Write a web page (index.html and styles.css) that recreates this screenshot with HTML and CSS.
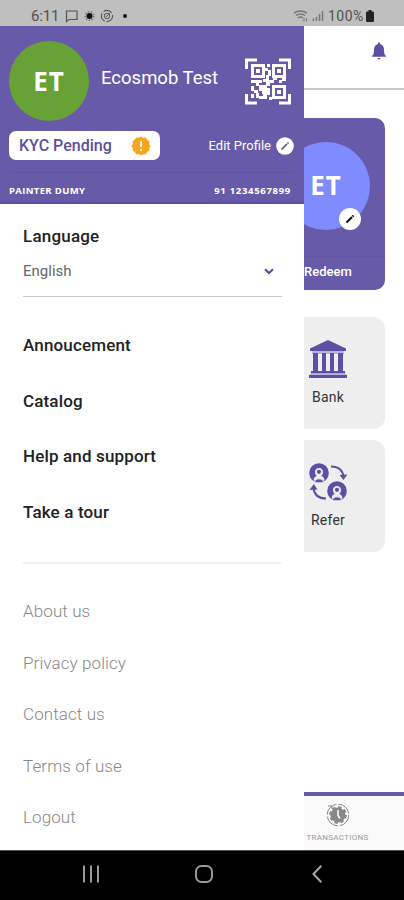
FILE: index.html
```html
<!DOCTYPE html>
<html lang="en">
<head>
<meta charset="utf-8">
<title>Ecosmob</title>
<link rel="stylesheet" href="styles.css">
</head>
<body>
<div class="phone">
  <div class="status">
    <span class="clock">6:11</span>
    <svg class="status-icons" width="66" height="14" viewBox="0 0 66 14" fill="none" stroke="#555">
      <path d="M1.500 2H12v8.500H4L1.500 12.500z" stroke-width="1.200"/>
      <circle cx="24.500" cy="7" r="4.300" stroke="#777" stroke-dasharray="1.500 1.500" stroke-width="1.500"/><circle cx="24.500" cy="7" r="3" fill="#111" stroke="none"/>
      <circle cx="42" cy="7" r="5.600" stroke-dasharray="9 2" stroke-width="1.100"/><circle cx="42" cy="7" r="2.700"/><path d="M41 8l4-4"/>
      <circle cx="60" cy="7" r="2" fill="#111" stroke="none"/>
    </svg>
    <svg class="signal" width="32" height="14" viewBox="0 0 32 14" fill="none" stroke="#777" stroke-width="1.200">
      <path d="M1 4q6.500-4 13 0M3 6.500q4.500-3 9 0M5 9q2.500-2 5 0" stroke-width="1.600"/><path d="M11 9v3.500M13.500 9v3.500" stroke-width="1"/>
      <path d="M20.500 12v-2.500M23.500 12V8M26.500 12V5M29.500 12V2" stroke-width="1.500"/>
    </svg>
    <span class="percent">100%</span>
    <svg width="8" height="12" viewBox="0 0 8 12"><path d="M2.500 0h3v1.500H7q1 0 1 1V11q0 1-1 1H1q-1 0-1-1V2.500q0-1 1-1h1.500z" fill="#222"/></svg>
  </div>

  <div class="app">
    <aside class="drawer">
      <header class="profile">
        <div class="identity">
          <div class="avatar">ET</div>
          <h1 class="name">Ecosmob Test</h1>
          <svg class="qr" width="46" height="47" viewBox="0 0 46 47" fill="none" stroke="#fff">
            <path d="M1.500 11V2H12M34 2h10.500v9M1.500 36v9H12M34 45h10.500v-9" stroke-width="3"/>
            <path d="M7.500 7.500h11v11h-11zM28.500 7.500h11v11h-11zM28.500 28.500h11v11h-11z" stroke-width="3"/>
            <g fill="#fff" stroke="none">
              <path d="M11 11h4v4h-4zM32 11h4v4h-4zM32 32h4v4h-4z"/>
              <path d="M22 6h3v3h-3zM20 10h3v3h-3zM23 12h3v6h-3zM21 17h3v5h4v-2h4v2h-3v3h-4v3h-4v-4h-3v-3h3zM6 22h11v3h-3v3h-3v-3H6zM34 22h3v3h-3zM37 20h4v3h-4zM14 27h8v3h3v3h-4v3h-4v-3h-3zM6 28h3v5H6zM9 32h4v3H9zM6 36h3v4H6zM11 35h3v5h-3zM14 38h4v-3h3v-2h4v4h-3v4h-8zM24 39h3v3h-3z"/>
            </g>
          </svg>
        </div>
        <div class="actions">
          <div class="kyc">
            <span>KYC Pending</span>
            <svg width="20" height="20" viewBox="0 0 20 20"><path d="M10 .5l2.200 1.200 2.600-.1 1.300 2.200 2.200 1.300-.1 2.600L19.500 10l-1.300 2.200.1 2.600-2.200 1.300-1.300 2.200-2.600-.1L10 19.500l-2.200-1.300-2.600.1-1.300-2.200-2.200-1.300.1-2.600L.5 10l1.300-2.300-.1-2.600 2.200-1.300 1.300-2.200 2.600.1z" fill="#f7a51c"/><path d="M10 5v6M10 13v2" stroke="#fff" stroke-width="2"/></svg>
          </div>
          <div class="edit">
            <span>Edit Profile</span>
            <svg width="18" height="18" viewBox="0 0 18 18"><circle cx="9" cy="9" r="8.800" fill="#fff"/><path d="M5.500 12.500l5.500-5.500M11.500 6.500l1-1" stroke="#5c5478" stroke-width="1.700"/></svg>
          </div>
        </div>
        <div class="facts"><span>PAINTER DUMY</span><span class="number">91 1234567899</span></div>
      </header>
      <section class="language">
        <h2>Language</h2>
        <div class="select"><span>English</span><svg width="10" height="7" viewBox="0 0 10 7"><path d="M1 1.200l4 3.800 4-3.800" fill="none" stroke="#5547a3" stroke-width="2"/></svg></div>
      </section>
      <nav class="menu">
        <a>Annoucement</a><a>Catalog</a><a>Help and support</a><a>Take a tour</a>
      </nav>
      <nav class="links">
        <a>About us</a><a>Privacy policy</a><a>Contact us</a><a>Terms of use</a><a>Logout</a>
      </nav>
    </aside>

    <main class="home">
      <div class="topbar">
        <svg width="14" height="18" viewBox="0 0 14 18" fill="#5c50a5"><path d="M6 1q1-1.500 2 0v1q3.800 1 4 5.500.1 4 .6 5L14 14v.8H0V14l1.400-1.500q.500-1 .6-5Q2.200 3 6 2zM5.300 16h3.400Q7 19 5.300 16z"/></svg>
      </div>
      <section class="points">
        <div class="photo">ET
          <svg class="badge" width="22" height="22" viewBox="0 0 22 22"><circle cx="11" cy="11" r="11" fill="#fff"/><path d="M7.500 14.500l5.500-5.500M13.500 8.500l1-1" stroke="#111" stroke-width="2.200"/></svg>
        </div>
        <div class="redeem">Redeem</div>
      </section>
      <section class="tile">
        <svg width="38" height="39" viewBox="0 0 38 39" fill="#5c50a5"><path d="M19 0l18 8.500V11H1V8.500z"/><path d="M3 11h32v3H3z" fill="#b9b4da"/><path d="M4 13h5v18H4zM13 13h4v18h-4zM21 13h4v18h-4zM29 13h5v18h-5zM2 31h34v2.500H2z"/><path d="M1 33.500h36V35H1z" fill="#b9b4da"/><path d="M0 35h38v3H0z"/></svg>
        <span>Bank</span>
      </section>
      <section class="tile">
        <svg width="38" height="39" viewBox="0 0 38 39" fill="none" stroke="#5c50a5">
          <g id="person"><circle cx="10" cy="10" r="9.800" fill="#5c50a5" stroke="none"/><path d="M4.500 17.500q.3-4 3.300-4.600-2.300-1.600-1.800-4.400Q6.700 5 10 5t4 3.500q.5 2.800-1.800 4.400 3 .6 3.300 4.600" fill="#eee" stroke="none"/><circle cx="10" cy="8.800" r="2.100" fill="#5c50a5" stroke="none"/><path d="M5.500 19.800q0-4 4.500-4t4.500 4z" fill="#5c50a5" stroke="#eee"/></g>
          <use href="#person" x="18" y="18"/>
          <path d="M22 3.500q11 0 12.500 10M17 35.500q-11 0-12.500-10" stroke-width="2"/>
          <path d="M30.500 12l8-.5-4 5.500zM.5 27l4.300-6L8.500 26.500z" fill="#5c50a5" stroke="none"/>
        </svg>
        <span>Refer</span>
      </section>
      <footer class="tab">
        <svg width="24" height="24" viewBox="0 0 24 24" fill="none" stroke="#888"><circle cx="12" cy="12" r="10.800" stroke-width="1" stroke-dasharray="15 2"/><circle cx="12" cy="12" r="7" fill="#888"/><circle cx="12" cy="12" r="7.800" stroke-width="2" stroke-dasharray="3.500 2.600"/><path d="M12 7v5.500l2 3" stroke="#fff" stroke-width="1.500"/><path d="M2 3h4v3" /></svg>
        <span>TRANSACTIONS</span>
      </footer>
    </main>
  </div>

  <div class="keys">
    <svg width="16" height="18" viewBox="0 0 16 18" stroke="#999" stroke-width="2"><path d="M1 .5v17M8 .5v17M15 .5v17"/></svg>
    <svg width="18" height="18" viewBox="0 0 18 18"><rect x="1" y="1" width="16" height="16" rx="5.500" fill="none" stroke="#999" stroke-width="2"/></svg>
    <svg class="back" width="10" height="18" viewBox="0 0 10 18"><path d="M9.300 .8L1.500 9l7.800 8.200" fill="none" stroke="#aaa" stroke-width="2"/></svg>
  </div>
</div>
</body>
</html>
```
FILE: styles.css
```css
* { box-sizing: border-box; }
body { margin: 0; background: #fff; font-family: Roboto, sans-serif; }
svg { display: block; flex: none; }
h1, h2 { margin: 0; }
.phone { width: 404px; height: 900px; display: flex; flex-direction: column; overflow: hidden; }

.status { height: 26px; flex: none; background: #bfbfbf; display: flex; align-items: center; padding: 5px 30px 0 31px; color: #505050; font-size: 15px; line-height: 20px; }
.clock { width: 34px; letter-spacing: -.2px; }
.signal { margin-left: auto; margin-right: 3px; }
.percent { width: 38px; font-size: 14px; letter-spacing: .5px; }

.app { display: grid; grid-template-columns: 304px 100px; height: 824px; flex: none; }
.drawer { background: #fff; min-width: 0; }
.profile { height: 178px; background: #675ba9; color: #fff; padding: 15px 13px 0 9px; border-bottom: 2px solid #5a4da2; }
.identity { display: flex; height: 80px; align-items: center; }
.avatar { width: 80px; height: 80px; border-radius: 50%; background: #68a237; font: 700 26px/80px "Open Sans", sans-serif; letter-spacing: 1px; text-align: center; flex: none; }
.name { margin: -7px 0 0 12px; font-weight: 400; font-size: 18.500px; line-height: 24px; letter-spacing: 0; white-space: nowrap; flex: 1; }
.qr { margin-top: 1px; }
.actions { display: flex; justify-content: space-between; margin: 10px -3px 0 0; height: 42px; border-bottom: 1px solid #5f53a2; }
.kyc { width: 151px; height: 29px; background: #fff; border-radius: 7px; display: flex; align-items: center; justify-content: space-between; padding: 0 9px 0 10px; color: #5c5099; font-weight: 500; font-size: 16px; letter-spacing: 0; }
.edit { height: 29px; display: flex; align-items: center; gap: 5px; font-size: 13px; }
.facts { display: flex; justify-content: space-between; font: 700 9.500px/14px "Open Sans", sans-serif; padding-top: 11px; letter-spacing: .35px; }
.number { letter-spacing: .7px; }

.language { margin: 0 22px 0 23px; height: 93px; padding-top: 21px; border-bottom: 1px solid #ccc; }
.language h2 { font-size: 17px; line-height: 22px; font-weight: 500; color: #222; letter-spacing: .2px; }
.select { display: flex; justify-content: space-between; align-items: center; margin-top: 13px; padding-right: 8px; font-size: 15px; line-height: 22px; color: #666; }
.menu { margin: 0 23px; height: 267px; padding-top: 21px; border-bottom: 2px solid #eee; display: flex; flex-direction: column; }
.menu a { height: 55.500px; line-height: 55.500px; font-size: 17px; font-weight: 500; color: #222; letter-spacing: .15px; }
.links { padding: 22px 23px 0; display: flex; flex-direction: column; }
.links a { height: 51.500px; line-height: 51.500px; font-size: 17px; font-weight: 300; color: #888; letter-spacing: .1px; }

.home { overflow: hidden; display: flex; flex-direction: column; min-width: 0; }
.topbar { height: 64px; flex: none; border-bottom: 2px solid #ccc; padding: 16px 18px 0 0; display: flex; justify-content: flex-end; }
.points { margin-top: 28px; width: 81px; height: 172px; flex: none; background: #675ba9; border-radius: 0 10px 10px 0; color: #fff; padding-top: 24px; }
.photo { position: relative; width: 88px; height: 88px; margin-left: -22px; border-radius: 50%; background: #808bff; text-align: center; font: 700 26px/86px "Open Sans", sans-serif; letter-spacing: 1px; }
.badge { position: absolute; right: 9px; bottom: 0; }
.redeem { margin-top: 26px; padding-top: 4px; border-top: 1px solid #6054a3; font-size: 13px; line-height: 22px; font-weight: 500; }
.tile { width: 81px; height: 112px; margin-top: 11px; padding: 23px 33px 0 0; flex: none; background: #eee; border-radius: 0 12px 12px 0; display: flex; flex-direction: column; align-items: center; color: #333; font-size: 14px; line-height: 20px; letter-spacing: .2px; }
.tile span { margin-top: 8px; }
.points + .tile { margin-top: 27px; }
.tab { margin-top: auto; width: 100px; height: 58px; border-top: 4px solid #675ba9; background: #fafafa; padding: 7px 33px 0 0; display: flex; flex-direction: column; align-items: center; color: #999; font-size: 8px; line-height: 12px; }
.tab span { margin-top: 5px; letter-spacing: .3px; }

.keys { height: 50px; background: #000; border-top: 1px solid #555; display: flex; align-items: center; padding: 0 0 3px 83px; gap: 96px; }
.back { margin-left: 3px; }
```
